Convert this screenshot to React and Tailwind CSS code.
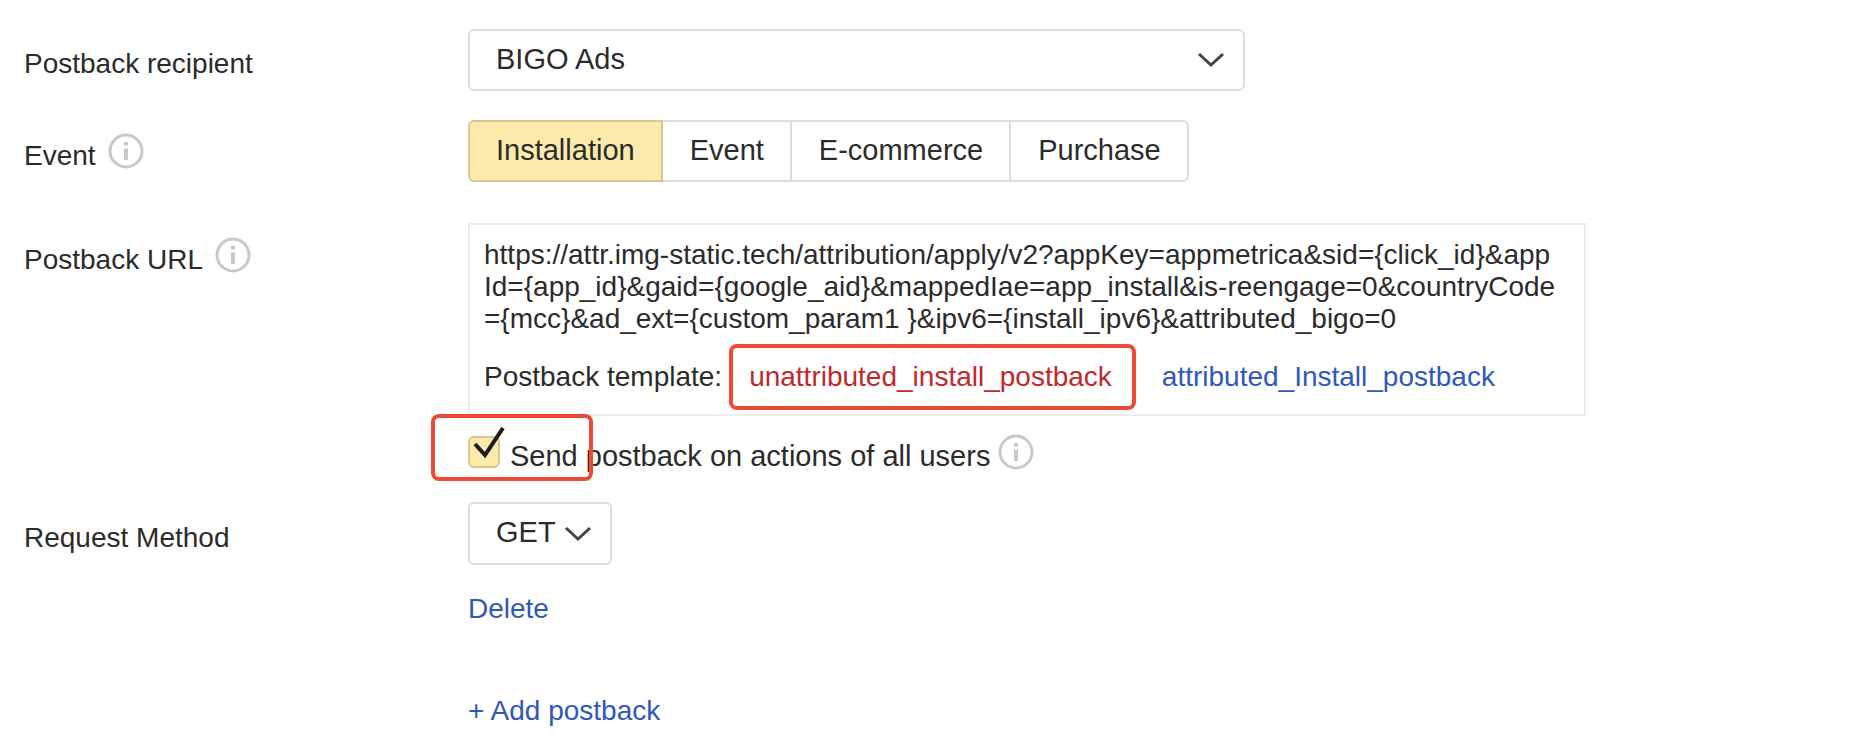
import { useState } from "react";

const EVENTS = ["Installation", "Event", "E-commerce", "Purchase"];

const DEFAULT_URL = [
  "https://attr.img-static.tech/attribution/apply/v2?appKey=appmetrica&sid={click_id}&app",
  "Id={app_id}&gaid={google_aid}&mappedIae=app_install&is-reengage=0&countryCode",
  "={mcc}&ad_ext={custom_param1 }&ipv6={install_ipv6}&attributed_bigo=0",
].join("\n");

function InfoIcon() {
  return (
    <svg
      className="h-9 w-9 shrink-0"
      viewBox="0 0 36 36"
      fill="none"
      stroke="#c8c8c8"
      aria-hidden="true"
    >
      <circle cx="18" cy="18" r="16" strokeWidth="3" />
      <path d="M18 9v3.5M18 15.5v11.5" strokeWidth="4" />
    </svg>
  );
}

function Chevron({ className }) {
  return (
    <svg
      className={`pointer-events-none absolute h-4 w-7 ${className}`}
      viewBox="0 0 28 16"
      fill="none"
      stroke="#444"
      strokeWidth="3"
      aria-hidden="true"
    >
      <path d="M2 2l12 11L26 2" />
    </svg>
  );
}

function Row({ label, htmlFor, info, labelClass = "pt-[13px]", children }) {
  return (
    <div className="grid grid-cols-[444px_minmax(0,1fr)]">
      <div className={`flex items-start gap-3 ${labelClass}`}>
        <label htmlFor={htmlFor} className="pt-[7px]">
          {label}
        </label>
        {info && <InfoIcon />}
      </div>
      <div>{children}</div>
    </div>
  );
}

export default function App() {
  const [event, setEvent] = useState("Installation");
  const [url, setUrl] = useState(DEFAULT_URL);
  const [allUsers, setAllUsers] = useState(true);

  return (
    <form className="bg-white pt-[29px] pl-6 font-['Liberation_Sans',Arial,sans-serif] text-[28px] leading-8 text-[#2b2b2b]">
      <Row label="Postback recipient" htmlFor="recipient" labelClass="pt-3">
        <div className="relative max-w-[777px]">
          <select
            id="recipient"
            className="block h-[62px] w-full appearance-none rounded-md border-2 border-[#dcdcdc] bg-white pr-16 pb-[2px] pl-[26px] text-[29px]"
          >
            <option>BIGO Ads</option>
          </select>
          <Chevron className="top-[23px] right-5" />
        </div>
      </Row>

      <div className="mt-[29px]">
        <Row label="Event" info>
          {/* Event type switch */}
          <div className="flex text-[29px]">
            {EVENTS.map((name) => (
              <button
                key={name}
                type="button"
                onClick={() => setEvent(name)}
                className={`-ml-[2px] h-[62px] border-2 pr-[26px] pb-[3px] pl-[27px] first:ml-0 first:rounded-l-md first:pl-[26px] last:rounded-r-md ${
                  event === name
                    ? "relative border-[#d5c88e] bg-[#fbeaa9]"
                    : "border-[#dcdcdc] bg-white"
                }`}
              >
                {name}
              </button>
            ))}
          </div>
        </Row>
      </div>

      <div className="mt-[41px]">
        <Row label="Postback URL" htmlFor="url" info labelClass="pt-[14px]">
          <div className="max-w-[1118px] border-2 border-[#ececec] px-[14px] pt-[14px] pb-[21px]">
            <textarea
              id="url"
              rows={3}
              value={url}
              onChange={(e) => setUrl(e.target.value)}
              className="block w-full resize-none overflow-hidden break-all outline-none"
            />
            <div className="mt-[26px] flex whitespace-nowrap">
              <span>Postback template:</span>
              <a href="#unattributed" className="relative ml-[27px] text-[#c0282d]">
                unattributed_install_postback
                <span className="absolute -top-[17px] -right-6 -bottom-[17px] -left-5 rounded-lg border-4 border-[#ee4a38]" />
              </a>
              <a href="#attributed" className="ml-[50px] text-[#3158b8]">
                attributed_Install_postback
              </a>
            </div>
          </div>

          <div className="relative mt-[18px] flex items-start">
            <span className="relative mt-[2px] h-8 w-8">
              <input
                id="all-users"
                type="checkbox"
                checked={allUsers}
                onChange={(e) => setAllUsers(e.target.checked)}
                className="block h-8 w-8 appearance-none rounded-md border-2 border-[#d5c88e] bg-[#fbeaa9]"
              />
              {allUsers && (
                <svg
                  className="pointer-events-none absolute -top-3 left-0 h-11 w-10"
                  viewBox="0 0 40 44"
                  fill="none"
                  stroke="#1c1c1c"
                  strokeWidth="4"
                  aria-hidden="true"
                >
                  <path d="M7 20l10 11L35 4" />
                </svg>
              )}
            </span>
            <label
              htmlFor="all-users"
              className="mr-2 ml-[10px] pt-[6px] text-[29px]"
            >
              Send postback on actions of all users
            </label>
            <InfoIcon />
            <span className="pointer-events-none absolute -top-5 -left-[37px] h-[67px] w-[162px] rounded-lg border-4 border-[#ee4a38]" />
          </div>
        </Row>
      </div>

      <div className="mt-[30px]">
        <Row label="Request Method" htmlFor="method">
          <div className="relative w-[144px]">
            <select
              id="method"
              className="block h-[63px] w-full appearance-none rounded-md border-2 border-[#dcdcdc] bg-white pb-1 pl-[26px] text-[29px]"
            >
              <option>GET</option>
            </select>
            <Chevron className="top-6 right-5" />
          </div>
          <button type="button" className="mt-7 block text-[#3158b8]">
            Delete
          </button>
          <button type="button" className="mt-[70px] block text-[#3158b8]">
            + Add postback
          </button>
        </Row>
      </div>
    </form>
  );
}
